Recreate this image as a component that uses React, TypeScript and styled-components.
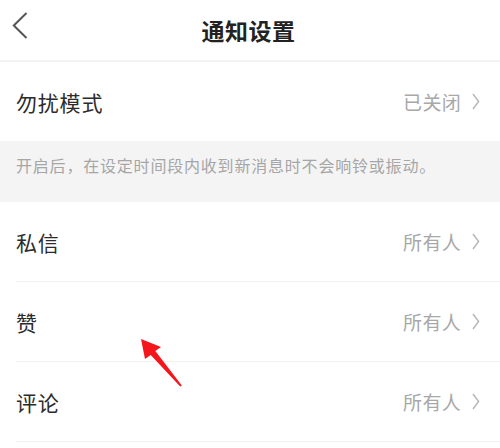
import React from "react";
import styled, { createGlobalStyle } from "styled-components";

interface Item {
  label: string;
  value: string;
}

const items: Item[] = [
  { label: "私信", value: "所有人" },
  { label: "赞", value: "所有人" },
  { label: "评论", value: "所有人" },
];

const Chevron: React.FC = () => (
  <svg width="8" height="17" viewBox="0 0 8 17" fill="none">
    <path d="M1 1 L6.6 8.5 L1 16" stroke="#b8b8b8" strokeWidth="1.5" />
  </svg>
);

const SettingRow: React.FC<{ item: Item; divider?: boolean }> = ({ item, divider = true }) => (
  <Row>
    <RowInner divider={divider}>
      <Label>{item.label}</Label>
      <Value>
        {item.value}
        <Chevron />
      </Value>
    </RowInner>
  </Row>
);

const App: React.FC = () => {
  return (
    <>
      <GlobalStyle />
      <Page>
        <Header>
          <BackButton>
            <svg width="16" height="28" viewBox="0 0 16 28" fill="none">
              <path d="M14.5 1 L1.8 13.5 L14.5 26" stroke="#555" strokeWidth="2" />
            </svg>
          </BackButton>
          <Title>通知设置</Title>
        </Header>
        <SettingRow item={{ label: "勿扰模式", value: "已关闭" }} divider={false} />
        <Hint>开启后，在设定时间段内收到新消息时不会响铃或振动。</Hint>
        {items.map((it) => (
          <SettingRow key={it.label} item={it} />
        ))}
        <Pointer width="500" height="448" viewBox="0 0 500 448">
          <polygon
            points="141,339 161,347 155.3,351.1 181.8,385.4 180.2,386.6 150.7,354.9 145,359"
            fill="#f4161a"
          />
        </Pointer>
      </Page>
    </>
  );
};

const GlobalStyle = createGlobalStyle`
  html, body {
    margin: 0;
    padding: 0;
    background: #ffffff;
  }
  body {
    font-family: "Noto Sans CJK SC", "Noto Sans", sans-serif;
  }
`;

const Page = styled.div`
  position: relative;
  width: 500px;
  height: 448px;
  overflow: hidden;
  background: #fff;
`;

const Header = styled.div`
  position: relative;
  height: 60px;
  display: flex;
  align-items: center;
  justify-content: center;
  border-bottom: 2px solid #f3f3f3;
`;

const BackButton = styled.div`
  position: absolute;
  left: 12px;
  top: 12px;
  display: flex;
`;

const Title = styled.div`
  font-size: 23px;
  font-weight: 700;
  color: #222;
  letter-spacing: 0.5px;
  margin-left: -3px;
`;

const Row = styled.div`
  padding-left: 16px;
`;

const RowInner = styled.div<{ divider: boolean }>`
  height: 79px;
  display: flex;
  align-items: center;
  justify-content: space-between;
  padding-right: 20px;
  border-bottom: ${(p) => (p.divider ? "1px solid #f0f0f0" : "none")};
`;

const Label = styled.div`
  font-size: 21px;
  color: #2b2b2b;
  letter-spacing: 0.8px;
`;

const Value = styled.div`
  display: flex;
  align-items: center;
  gap: 11px;
  font-size: 19px;
  color: #a8a8a8;
  letter-spacing: 0.3px;
`;

const Hint = styled.div`
  height: 61px;
  box-sizing: border-box;
  padding: 12px 16px 0;
  background: #f4f4f4;
  font-size: 16px;
  letter-spacing: 0.8px;
  color: #a6a6a6;
`;

const Pointer = styled.svg`
  position: absolute;
  left: 0;
  top: 0;
  pointer-events: none;
`;

export default App;
